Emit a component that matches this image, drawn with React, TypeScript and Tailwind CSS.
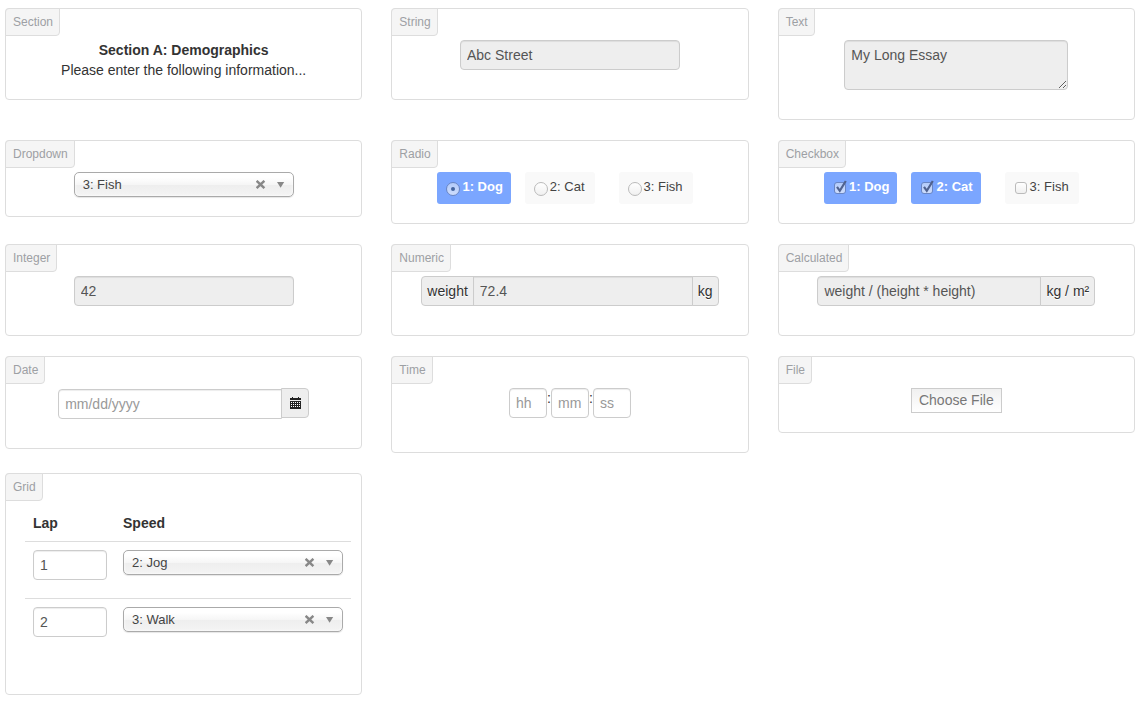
import React, { useState } from "react";
import type { ReactNode } from "react";

const FIELD =
  "h-[30px] border border-[#ccc] px-1.5 text-sm leading-5 text-[#555] shadow-[inset_0_1px_1px_rgba(0,0,0,0.075)] outline-none placeholder:text-[#999] placeholder:opacity-100";
const ADDON =
  "flex h-[30px] items-center border border-[#ccc] bg-[#eee] px-[5px] text-sm leading-5 text-[#333] [text-shadow:0_1px_0_#fff]";

function Card({ title, children, className = "justify-center px-[19px]" }: { title: string; children: ReactNode; className?: string }) {
  return (
    <section className="min-w-0 rounded border border-[#ddd] bg-white pb-[19px]">
      <h2 className="-mt-px -ml-px mb-1 h-7 w-fit rounded-tl rounded-br border border-[#ddd] bg-[#f5f5f5] py-[3px] pr-[6px] pl-[7px] text-xs leading-5 text-[#9da0a4]">
        {title}
      </h2>
      <div className={`flex ${className}`}>{children}</div>
    </section>
  );
}

function ClearableSelect({ label, initial, options, className = "w-[220px]" }: { label: string; initial: string; options: string[]; className?: string }) {
  const [value, setValue] = useState(initial);
  return (
    <div className={`relative ${className}`}>
      <select
        aria-label={label}
        value={value}
        onChange={(e) => setValue(e.target.value)}
        className="block h-[25px] w-full appearance-none rounded-[5px] border border-[#aaa] bg-[linear-gradient(#fff_20%,#f6f6f6_50%,#eee_52%,#f4f4f4_100%)] pr-12 pl-2 text-[13px] leading-[23px] text-[#444] shadow-[0_1px_1px_rgba(0,0,0,0.1),inset_0_0_3px_#fff] outline-none"
      >
        <option value=""></option>
        {options.map((o) => (
          <option key={o}>{o}</option>
        ))}
      </select>
      <button type="button" aria-label={`Clear ${label}`} onClick={() => setValue("")} className="absolute top-2 right-7 size-[10px]">
        <svg viewBox="0 0 10 10" className="size-[10px]" fill="none" stroke="#888" strokeWidth="2.4">
          <path d="M0.6 0.8L8.4 8.2M8.4 0.8L0.6 8.2" />
        </svg>
      </button>
      <svg viewBox="0 0 8 6" className="pointer-events-none absolute top-[10px] right-[9px] h-[6px] w-2" fill="#888">
        <path d="M0 0H7.2L3.6 5.8Z" />
      </svg>
    </div>
  );
}

function Choices({ type, initial }: { type: "radio" | "checkbox"; initial: string[] }) {
  const [picked, setPicked] = useState(initial);
  const toggle = (o: string) =>
    setPicked((p) => (type === "radio" ? [o] : p.includes(o) ? p.filter((x) => x !== o) : [...p, o]));
  return (
    <div className="flex gap-[14px] pr-[10px]">
      {["1: Dog", "2: Cat", "3: Fish"].map((o) => {
        const on = picked.includes(o);
        return (
          <label
            key={o}
            className={`flex h-8 rounded-[3px] pt-[5px] pl-[9px] text-[13px] leading-5 last:ml-[10px] ${
              on ? "bg-[#7ba6ff] pr-2 font-bold text-white" : "bg-[#f9f9f9] pr-[10px] text-[#444]"
            }`}
          >
            <span className="relative mt-[5px] mr-0.5 block size-[14px]">
              <input
                type={type}
                name={`${type}-animal`}
                checked={on}
                onChange={() => toggle(o)}
                className={`block appearance-none border ${
                  on ? "border-[#6a86c4] bg-[linear-gradient(#b3cbfa,#cddcfc)]" : "border-[#bbb] bg-[linear-gradient(#fff,#f0f0f0)]"
                } ${type === "radio" ? "size-[14px] rounded-full" : "ml-px size-3 rounded-[3px]"}`}
              />
              {on && (
                <svg viewBox="0 0 14 14" className="pointer-events-none absolute top-0 left-0 size-[14px] overflow-visible">
                  {type === "radio" ? (
                    <circle cx="7" cy="7" r="2" fill="#44659f" />
                  ) : (
                    <path d="M4 4.8L6.8 8.8L12.8 -1" fill="none" stroke="#50628f" strokeWidth="2.2" />
                  )}
                </svg>
              )}
            </span>
            {o}
          </label>
        );
      })}
    </div>
  );
}

function CalendarIcon() {
  return (
    <svg viewBox="0 0 11 12" className="h-3 w-[11px]" shapeRendering="crispEdges">
      <path d="M0 4H11V12H0Z" fill="#222" />
      <path d="M2 0H3V1H8V0H9V1H11V3H0V1H2Z" fill="#222" />
      <path
        fill="#fff"
        d="M1 5H2V6H1ZM3 5H4V6H3ZM5 5H6V6H5ZM7 5H8V6H7ZM9 5H10V6H9ZM1 7H2V8H1ZM3 7H4V8H3ZM5 7H6V8H5ZM7 7H8V8H7ZM9 7H10V8H9ZM1 9H2V10H1ZM3 9H4V10H3ZM5 9H6V10H5ZM7 9H8V10H7ZM9 9H10V10H9Z"
      />
    </svg>
  );
}

const LAPS = [
  { lap: "1", speed: "2: Jog" },
  { lap: "2", speed: "3: Walk" },
];

export default function App() {
  return (
    <main className="grid grid-cols-3 items-start gap-x-[29px] gap-y-5 pt-2 pr-[7px] pb-[6px] pl-[5px] font-['Liberation_Sans',Arial,sans-serif] text-sm leading-5 text-[#333]">
      <Card title="Section">
        <div className="text-center">
          <strong className="block font-bold">Section A: Demographics</strong>
          <p>Please enter the following information...</p>
        </div>
      </Card>
      <Card title="String">
        <input aria-label="String" readOnly defaultValue="Abc Street" className={`${FIELD} mb-[10px] w-[220px] rounded bg-[#eee]`} />
      </Card>
      <Card title="Text">
        <textarea
          aria-label="Text"
          readOnly
          defaultValue="My Long Essay"
          className="mb-[10px] block h-[50px] w-56 resize rounded border border-[#ccc] bg-[#eee] px-1.5 py-1 text-sm leading-5 text-[#555] shadow-[inset_0_1px_1px_rgba(0,0,0,0.075)] outline-none"
        />
      </Card>

      <Card title="Dropdown">
        <ClearableSelect label="Dropdown" initial="3: Fish" options={["1: Dog", "2: Cat", "3: Fish"]} />
      </Card>
      <Card title="Radio">
        <Choices type="radio" initial={["1: Dog"]} />
      </Card>
      <Card title="Checkbox">
        <Choices type="checkbox" initial={["1: Dog", "2: Cat"]} />
      </Card>

      <Card title="Integer">
        <input aria-label="Integer" readOnly defaultValue="42" className={`${FIELD} mb-[10px] w-[220px] rounded bg-[#eee]`} />
      </Card>
      <Card title="Numeric">
        <div className="mb-[10px] flex">
          <label htmlFor="numeric" className={`${ADDON} rounded-l`}>weight</label>
          <input id="numeric" readOnly defaultValue="72.4" className={`${FIELD} -mx-px w-[220px] bg-[#eee]`} />
          <span className={`${ADDON} rounded-r`}>kg</span>
        </div>
      </Card>
      <Card title="Calculated">
        <div className="mb-[10px] flex">
          <input
            aria-label="Calculated"
            readOnly
            defaultValue="weight / (height * height)"
            className={`${FIELD} -mr-px w-56 rounded-l bg-[#eee]`}
          />
          <span className={`${ADDON} rounded-r`}>kg / m²</span>
        </div>
      </Card>

      <Card title="Date">
        <div className="mb-[10px] flex h-[31px]">
          <input aria-label="Date" placeholder="mm/dd/yyyy" className={`${FIELD} -mr-px w-56 self-end rounded-l bg-white`} />
          <button type="button" aria-label="Open calendar" className={`${ADDON} w-7 justify-center self-start rounded-r`}>
            <CalendarIcon />
          </button>
        </div>
      </Card>
      <Card title="Time">
        <div className="mb-[15px] flex">
          <input aria-label="Hours" placeholder="hh" className={`${FIELD} w-[38px] rounded bg-white`} />
          <span className="w-1">:</span>
          <input aria-label="Minutes" placeholder="mm" className={`${FIELD} w-[38px] rounded bg-white`} />
          <span className="w-1">:</span>
          <input aria-label="Seconds" placeholder="ss" className={`${FIELD} w-[38px] rounded bg-white`} />
        </div>
      </Card>
      <Card title="File">
        <label className="relative h-[25px] border border-[#ccc] bg-[linear-gradient(#f0f0f0,#fff)] px-[7px] leading-[23px] text-[#777]">
          Choose File
          <input type="file" className="sr-only" />
        </label>
      </Card>

      <Card title="Grid" className="pr-[10px] pl-[19px]">
        <table className="mb-5 w-full text-left">
          <thead>
            <tr>
              <th className="w-[90px] p-2 font-bold">Lap</th>
              <th className="p-2 font-bold">Speed</th>
            </tr>
          </thead>
          <tbody>
            {LAPS.map((row) => (
              <tr key={row.lap} className="border-t border-[#ddd] align-top">
                <td className="p-2">
                  <input aria-label={`Lap ${row.lap}`} defaultValue={row.lap} className={`${FIELD} mb-[10px] block w-full rounded bg-white`} />
                </td>
                <td className="p-2">
                  <ClearableSelect
                    label={`Speed for lap ${row.lap}`}
                    initial={row.speed}
                    options={["1: Run", "2: Jog", "3: Walk"]}
                    className="w-full"
                  />
                </td>
              </tr>
            ))}
          </tbody>
        </table>
      </Card>
    </main>
  );
}
